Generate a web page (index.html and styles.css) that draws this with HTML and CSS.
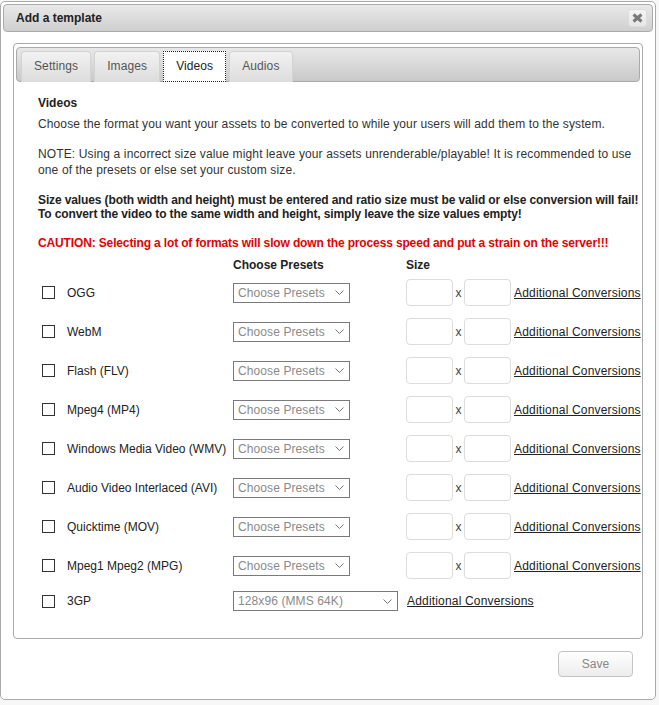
FILE: index.html
```html
<!DOCTYPE html>
<html>
<head>
<meta charset="utf-8">
<link rel="stylesheet" href="styles.css">
</head>
<body>
<div class="dialog">
  <div class="titlebar">
    <span class="title">Add a template</span>
    <span class="close"><svg width="11" height="10" viewBox="0 0 11 10"><path d="M1.5 1.5 L9.5 8.5 M9.5 1.5 L1.5 8.5" stroke="#7a7a7a" stroke-width="3" stroke-linecap="butt"/></svg></span>
  </div>
  <div class="dcontent">
    <div class="panel">
      <ul class="tabs">
        <li class="tab">Settings</li>
        <li class="tab">Images</li>
        <li class="tab active">Videos</li>
        <li class="tab">Audios</li>
      </ul>
      <div class="tabbody">
        <h4 class="heading">Videos</h4>
        <p class="p1">Choose the format you want your assets to be converted to while your users will add them to the system.</p>
        <p class="note">NOTE: Using a incorrect size value might leave your assets unrenderable/playable! It is recommended to use<br>one of the presets or else set your custom size.</p>
        <p class="bold">Size values (both width and height) must be entered and ratio size must be valid or else conversion will fail!<br>To convert the video to the same width and height, simply leave the size values empty!</p>
        <p class="caution">CAUTION: Selecting a lot of formats will slow down the process speed and put a strain on the server!!!</p>
        <div class="hrow"><span class="hpre">Choose Presets</span><span class="hsize">Size</span></div>

        <div class="row"><span class="cb"></span><span class="name">OGG</span><div class="sel"><span>Choose Presets</span><svg class="chev" width="9" height="5" viewBox="0 0 9 5"><path d="M0.5 0.5 L4.5 4.5 L8.5 0.5" fill="none" stroke="#777" stroke-width="1"/></svg></div><span class="inp"></span><span class="x">x</span><span class="inp"></span><a class="link">Additional Conversions</a></div>
        <div class="row"><span class="cb"></span><span class="name">WebM</span><div class="sel"><span>Choose Presets</span><svg class="chev" width="9" height="5" viewBox="0 0 9 5"><path d="M0.5 0.5 L4.5 4.5 L8.5 0.5" fill="none" stroke="#777" stroke-width="1"/></svg></div><span class="inp"></span><span class="x">x</span><span class="inp"></span><a class="link">Additional Conversions</a></div>
        <div class="row"><span class="cb"></span><span class="name">Flash (FLV)</span><div class="sel"><span>Choose Presets</span><svg class="chev" width="9" height="5" viewBox="0 0 9 5"><path d="M0.5 0.5 L4.5 4.5 L8.5 0.5" fill="none" stroke="#777" stroke-width="1"/></svg></div><span class="inp"></span><span class="x">x</span><span class="inp"></span><a class="link">Additional Conversions</a></div>
        <div class="row"><span class="cb"></span><span class="name">Mpeg4 (MP4)</span><div class="sel"><span>Choose Presets</span><svg class="chev" width="9" height="5" viewBox="0 0 9 5"><path d="M0.5 0.5 L4.5 4.5 L8.5 0.5" fill="none" stroke="#777" stroke-width="1"/></svg></div><span class="inp"></span><span class="x">x</span><span class="inp"></span><a class="link">Additional Conversions</a></div>
        <div class="row"><span class="cb"></span><span class="name">Windows Media Video (WMV)</span><div class="sel"><span>Choose Presets</span><svg class="chev" width="9" height="5" viewBox="0 0 9 5"><path d="M0.5 0.5 L4.5 4.5 L8.5 0.5" fill="none" stroke="#777" stroke-width="1"/></svg></div><span class="inp"></span><span class="x">x</span><span class="inp"></span><a class="link">Additional Conversions</a></div>
        <div class="row"><span class="cb"></span><span class="name">Audio Video Interlaced (AVI)</span><div class="sel"><span>Choose Presets</span><svg class="chev" width="9" height="5" viewBox="0 0 9 5"><path d="M0.5 0.5 L4.5 4.5 L8.5 0.5" fill="none" stroke="#777" stroke-width="1"/></svg></div><span class="inp"></span><span class="x">x</span><span class="inp"></span><a class="link">Additional Conversions</a></div>
        <div class="row"><span class="cb"></span><span class="name">Quicktime (MOV)</span><div class="sel"><span>Choose Presets</span><svg class="chev" width="9" height="5" viewBox="0 0 9 5"><path d="M0.5 0.5 L4.5 4.5 L8.5 0.5" fill="none" stroke="#777" stroke-width="1"/></svg></div><span class="inp"></span><span class="x">x</span><span class="inp"></span><a class="link">Additional Conversions</a></div>
        <div class="row"><span class="cb"></span><span class="name">Mpeg1 Mpeg2 (MPG)</span><div class="sel"><span>Choose Presets</span><svg class="chev" width="9" height="5" viewBox="0 0 9 5"><path d="M0.5 0.5 L4.5 4.5 L8.5 0.5" fill="none" stroke="#777" stroke-width="1"/></svg></div><span class="inp"></span><span class="x">x</span><span class="inp"></span><a class="link">Additional Conversions</a></div>
        <div class="row last"><span class="cb"></span><span class="name">3GP</span><div class="sel wide"><span>128x96 (MMS 64K)</span><svg class="chev" width="9" height="5" viewBox="0 0 9 5"><path d="M0.5 0.5 L4.5 4.5 L8.5 0.5" fill="none" stroke="#777" stroke-width="1"/></svg></div><a class="link l3">Additional Conversions</a></div>
      </div>
    </div>
    <div class="footer"><span class="save">Save</span></div>
  </div>
</div>
</body>
</html>
```

FILE: styles.css
```css
html, body {
  margin: 0;
  padding: 0;
}
body {
  background: #f7f7f7;
  font-family: "Liberation Sans", Arial, sans-serif;
  font-size: 12px;
  color: #222;
  width: 659px;
  height: 705px;
  overflow: hidden;
}
.dialog {
  box-sizing: border-box;
  width: 656px;
  height: 699px;
  margin-top: 1px;
  border: 1px solid #aaa;
  border-radius: 5px;
  background: #fff;
  padding: 2px;
}
.titlebar {
  box-sizing: border-box;
  height: 28px;
  border: 1px solid #aaa;
  border-radius: 4px;
  background: linear-gradient(#e9e9e9, #cfcfcf);
  display: flex;
  align-items: center;
  justify-content: space-between;
  padding: 0 5px 0 12px;
}
.title {
  font-weight: bold;
  color: #222;
}
.close {
  box-sizing: border-box;
  width: 19px;
  height: 18px;
  background: linear-gradient(#f4f4f4, #e6e6e6);
  border: 1px solid #ddd;
  border-radius: 3px;
  display: flex;
  align-items: center;
  justify-content: center;
}
.dcontent {
  padding: 11px 10px 0 10px;
}
.panel {
  box-sizing: border-box;
  height: 596px;
  border: 1px solid #aaa;
  border-radius: 4px;
  padding: 3px 2px 0 2px;
}
.tabs {
  box-sizing: border-box;
  list-style: none;
  margin: 0;
  height: 35px;
  border: 1px solid #aaa;
  border-radius: 4px;
  background: linear-gradient(#e8e8e8, #c9c9c9);
  padding: 3px 0 0 4px;
  display: flex;
  align-items: flex-start;
}
.tab {
  box-sizing: border-box;
  height: 31px;
  padding: 0 12px;
  line-height: 29px;
  border: 1px solid #d3d3d3;
  border-bottom: none;
  border-radius: 4px 4px 0 0;
  background: linear-gradient(#f2f2f2, #dcdcdc);
  color: #555;
  margin-right: 3px;
  letter-spacing: 0.1px;
}
.tab.active {
  background: #fff;
  color: #222;
  border: 1px dotted #222;
  border-radius: 0;
  padding: 0 12px;
}
.tabbody {
  padding: 13px 0 21px 22px;
}
.heading {
  margin: 0 0 5px 0;
  font-size: 12px;
  font-weight: bold;
  line-height: 16px;
}
.p1 {
  margin: 0;
  line-height: 16px;
  color: #333;
  letter-spacing: 0.11px;
}
.note {
  margin: 14px 0 0 0;
  line-height: 16px;
  color: #333;
  white-space: nowrap;
  letter-spacing: 0.13px;
}
.bold {
  margin: 15px 0 0 0;
  line-height: 14px;
  font-weight: bold;
  white-space: nowrap;
  letter-spacing: -0.12px;
}
.caution {
  margin: 14px 0 0 0;
  line-height: 16px;
  font-weight: bold;
  color: #e60000;
  white-space: nowrap;
  letter-spacing: -0.14px;
}
.hrow {
  margin-top: 6px;
  height: 16px;
  line-height: 16px;
  font-weight: bold;
  display: flex;
}
.hpre {
  margin-left: 195px;
  width: 173px;
}
.row {
  height: 39px;
  display: flex;
  align-items: center;
  white-space: nowrap;
}
.row.last {
  height: 32px;
}
.cb {
  box-sizing: border-box;
  width: 13px;
  height: 13px;
  border: 1px solid #333;
  background: #fff;
  margin-left: 4px;
  margin-right: 12px;
  flex: none;
}
.name {
  width: 166px;
  flex: none;
  color: #222;
}
.sel {
  box-sizing: border-box;
  width: 117px;
  height: 20px;
  border: 1px solid #7a7a7a;
  display: flex;
  align-items: center;
  justify-content: space-between;
  padding: 0 5px 0 4px;
  color: #8a8a8a;
  margin-right: 56px;
  flex: none;
  letter-spacing: 0.1px;
}
.sel.wide {
  width: 165px;
  margin-right: 9px;
}
.chev {
  display: block;
}
.inp {
  box-sizing: border-box;
  width: 47px;
  height: 27px;
  border: 1px solid #dcdcdc;
  border-radius: 4px;
  flex: none;
}
.x {
  width: 11px;
  text-align: center;
  color: #444;
  flex: none;
}
.link {
  margin-left: 3px;
  color: #222;
  text-decoration: underline;
  letter-spacing: 0.18px;
}
.link.l3 {
  margin-left: 0;
}
.footer {
  display: flex;
  justify-content: flex-end;
  padding: 12px 10px 0 0;
}
.save {
  box-sizing: border-box;
  width: 75px;
  height: 26px;
  border: 1px solid #c4c4c4;
  border-radius: 4px;
  background: linear-gradient(#fff, #ececec);
  color: #888;
  display: flex;
  align-items: center;
  justify-content: center;
}
```
